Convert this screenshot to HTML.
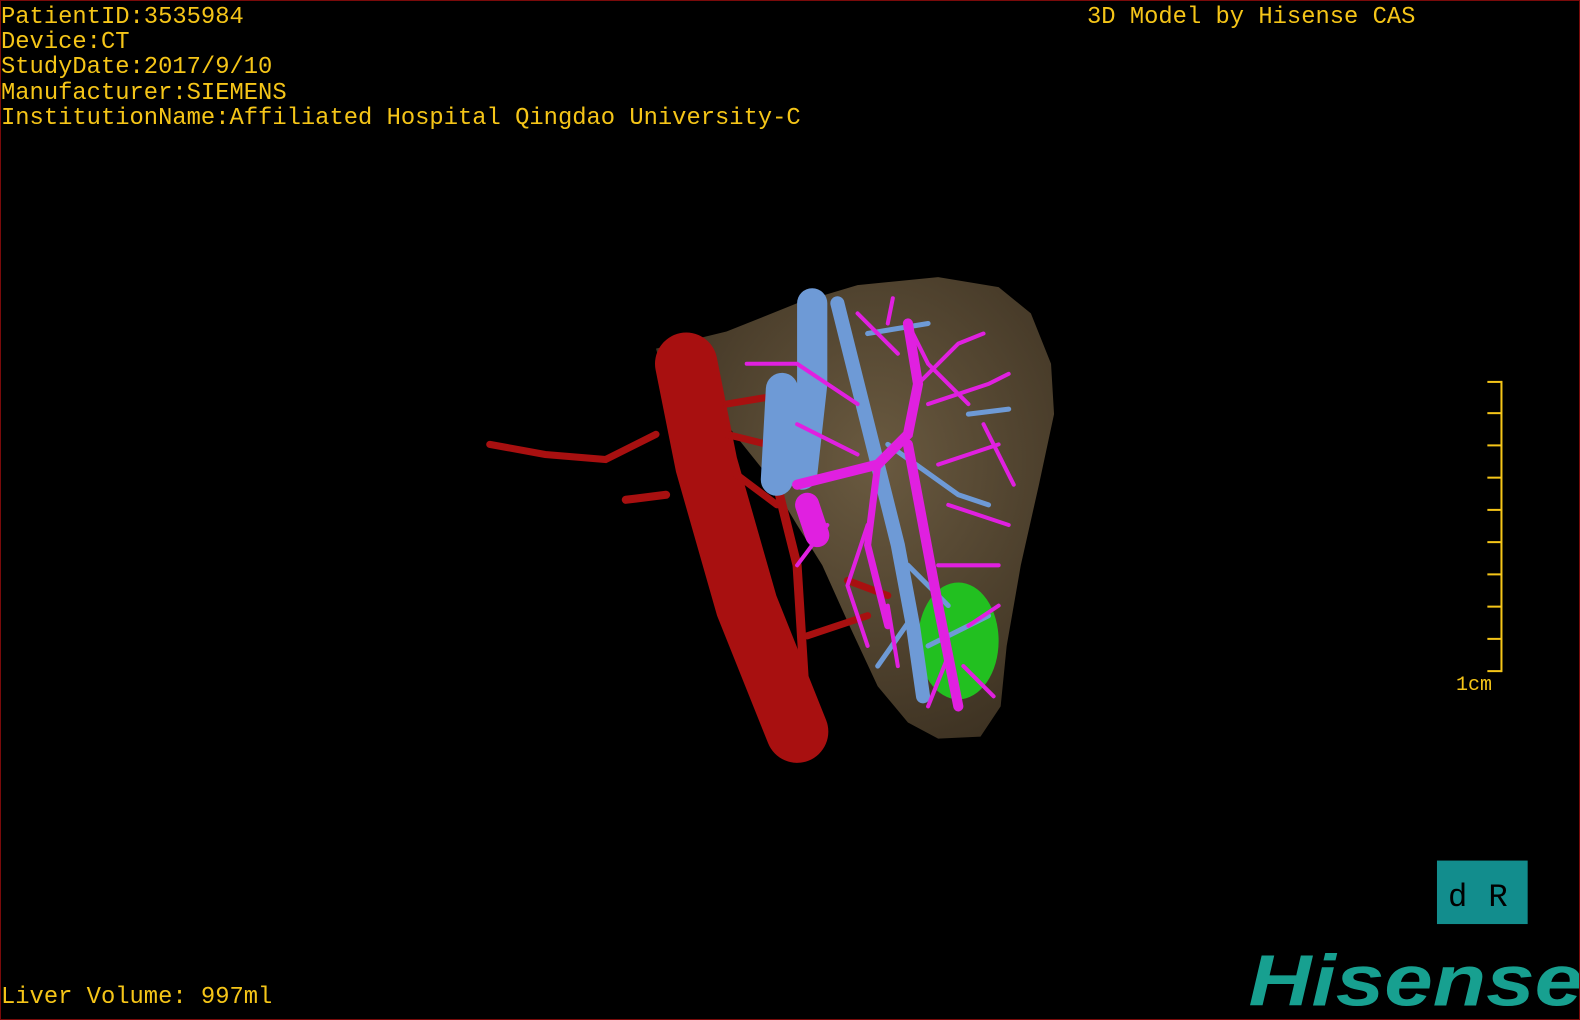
<!DOCTYPE html>
<html><head><meta charset="utf-8"><style>
html,body{margin:0;padding:0;background:#000;}
#s{position:relative;width:1580px;height:1020px;background:#000;overflow:hidden;box-sizing:border-box;border:1px solid #7a0a0a;}
.t{position:absolute;font-family:"Liberation Mono",monospace;font-size:23.8px;color:#f5c518;line-height:25.2px;white-space:pre;letter-spacing:0;}
</style></head><body><div id="s">
<div class="t" style="left:0;top:4px">PatientID:3535984
Device:CT
StudyDate:2017/9/10
Manufacturer:SIEMENS
InstitutionName:Affiliated Hospital Qingdao University-C</div>
<div class="t" style="left:1086px;top:4px">3D Model by Hisense CAS</div>
<div class="t" style="left:0;top:984px">Liver Volume: 997ml</div>
<div class="t" style="left:1455px;top:672px;font-size:20px">1cm</div>
<svg width="1580" height="1020" style="position:absolute;left:0;top:0">
<g transform="scale(1.0077)">
<g stroke="#f5c518" stroke-width="2">
<line x1="1489" y1="377" x2="1489" y2="666"/>
<line x1="1475" y1="378" x2="1489" y2="378"/><line x1="1475" y1="409" x2="1489" y2="409"/><line x1="1475" y1="441" x2="1489" y2="441"/><line x1="1475" y1="473" x2="1489" y2="473"/><line x1="1475" y1="505" x2="1489" y2="505"/><line x1="1475" y1="537" x2="1489" y2="537"/><line x1="1475" y1="569" x2="1489" y2="569"/><line x1="1475" y1="601" x2="1489" y2="601"/><line x1="1475" y1="633" x2="1489" y2="633"/><line x1="1475" y1="665" x2="1489" y2="665"/>
</g>
<defs><radialGradient id="lv" cx="0.55" cy="0.4" r="0.7"><stop offset="0" stop-color="#6a5a40"/><stop offset="1" stop-color="#3a2f20"/></radialGradient></defs>
<path d="M650 345 L720 328 L790 300 L850 282 L930 274 L990 284 L1022 310 L1042 360 L1045 410 L1030 480 L1012 560 L998 640 L992 700 L972 730 L930 732 L900 716 L870 680 L842 620 L815 560 L790 520 L760 470 L720 420 L660 380 Z" fill="url(#lv)"/>
<g stroke="#a81010" fill="none" stroke-linecap="round">
<path d="M680 360 L700 460 L740 600 L790 725" stroke-width="62"/>
<path d="M770 480 L790 560 L800 720" stroke-width="9"/>
<path d="M650 430 L600 455 L540 450 L485 440" stroke-width="7"/>
<path d="M660 490 L620 495" stroke-width="8"/>
<path d="M720 400 L780 390 M720 430 L760 440 M730 470 L770 500 M800 630 L860 610 M840 575 L880 590" stroke-width="7"/>
</g>
<ellipse cx="950" cy="635" rx="40" ry="58" fill="#22c020"/>
<g stroke="#6e9ad6" fill="none" stroke-linecap="round">
<path d="M805 300 L805 380 L795 470" stroke-width="30"/>
<path d="M775 385 L770 475" stroke-width="32"/>
<path d="M830 300 L860 420 L890 540 L905 620 L915 690" stroke-width="14"/>
<path d="M860 330 L920 320 M880 440 L950 490 L980 500 M900 560 L940 600 M905 610 L870 660 M920 640 L980 610 M960 410 L1000 405" stroke-width="5"/>
</g>
<g stroke="#e020e0" fill="none" stroke-linecap="round">
<path d="M800 500 L810 530" stroke-width="24"/>
<path d="M790 480 L830 470 L870 460 L900 430 L910 380 L900 320" stroke-width="10"/>
<path d="M900 440 L915 520 L930 600 L950 700" stroke-width="10"/>
<path d="M870 460 L860 540 L880 620" stroke-width="7"/>
<path d="M910 380 L950 340 L975 330 M920 400 L980 380 L1000 370 M930 460 L990 440 M940 500 L1000 520 M930 560 L990 560 M960 620 L990 600 M880 320 L885 295 M850 400 L790 360 L740 360 M860 520 L840 580 L860 640 M900 320 L920 360 L960 400 M940 650 L920 700 M955 660 L985 690 M820 520 L790 560 M880 600 L890 660 M975 420 L1005 480 M850 450 L790 420 M890 350 L850 310" stroke-width="4"/>
</g>
<rect x="1425" y="853" width="90" height="63" fill="#128d8d"/>
<text x="1436" y="898" font-family="Liberation Mono,monospace" font-size="32" fill="#000">d</text>
<text x="1476" y="898" font-family="Liberation Mono,monospace" font-size="32" fill="#000">R</text>
<text x="1238" y="997" font-family="Liberation Sans,sans-serif" font-weight="bold" font-style="italic" font-size="72" fill="#17a090" textLength="332" lengthAdjust="spacingAndGlyphs">Hisense</text>
</g>
</svg>
</div></body></html>
